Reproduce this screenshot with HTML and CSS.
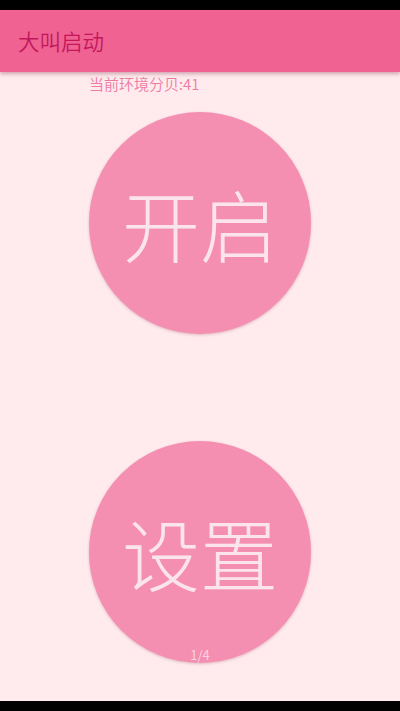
FILE: index.html
```html
<!DOCTYPE html>
<html lang="zh">
<head>
<meta charset="utf-8">
<link rel="stylesheet" href="styles.css">
</head>
<body>
<div class="screen">
  <div class="statusbar"></div>
  <div class="appbar"><span class="title">大叫启动</span></div>
  <div class="content">
    <div class="label">当前环境分贝:41</div>
    <div class="circle first"><span>开启</span></div>
    <div class="circle second"><span>设置</span></div>
    <div class="pager">1/4</div>
  </div>
  <div class="navbar"></div>
</div>
</body>
</html>
```
FILE: styles.css
```css
html, body {
  margin: 0;
  padding: 0;
}
body {
  font-family: "Noto Sans CJK SC", "Noto Sans", Roboto, sans-serif;
  background: #000;
}
.screen {
  width: 400px;
  height: 711px;
  display: flex;
  flex-direction: column;
  overflow: hidden;
}
.statusbar {
  height: 10px;
  background: #000;
  flex: none;
}
.appbar {
  height: 62px;
  flex: none;
  background: #F06292;
  display: flex;
  align-items: center;
  padding-left: 18px;
  box-shadow: 0 2px 4px rgba(120, 30, 60, 0.35);
  position: relative;
  z-index: 2;
}
.title {
  font-size: 21.5px;
  font-weight: 350;
  color: #C2185B;
  line-height: 1;
}
.content {
  flex: 1;
  background: #FFEBEE;
  position: relative;
  display: flex;
  flex-direction: column;
  align-items: center;
  padding-top: 2px;
}
.label {
  align-self: flex-start;
  margin-left: 89px;
  font-size: 15px;
  font-weight: 350;
  line-height: 20px;
  height: 20px;
  color: #EE7AA2;
}
.circle {
  width: 222px;
  height: 222px;
  border-radius: 50%;
  background: #F48FB1;
  display: flex;
  align-items: center;
  justify-content: center;
  box-shadow: 0 1px 3px rgba(150, 60, 90, 0.3);
}
.circle span {
  color: #FCE4EC;
  font-size: 78px;
  font-weight: 300;
  line-height: 1;
}
.first {
  margin-top: 18px;
}
.second {
  margin-top: 107px;
}
.pager {
  position: absolute;
  left: 0;
  right: 0;
  top: 575px;
  text-align: center;
  font-size: 13px;
  line-height: 16px;
  color: rgba(255, 255, 255, 0.6);
}
.navbar {
  height: 10px;
  background: #000;
  flex: none;
}
```
